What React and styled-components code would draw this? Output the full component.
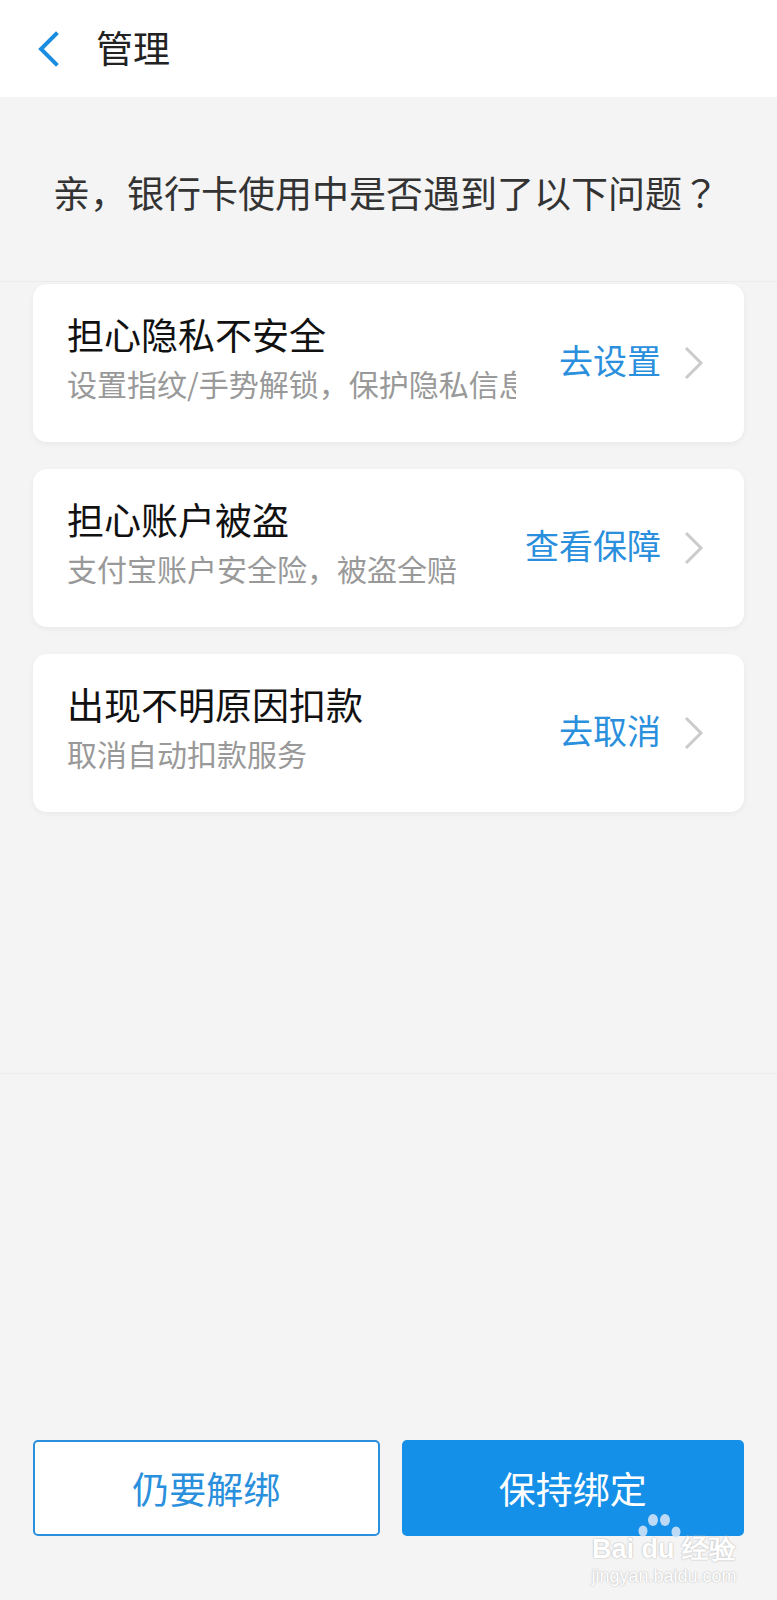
import React from "react";
import styled, { createGlobalStyle } from "styled-components";

const GlobalStyle = createGlobalStyle`
  body {
    margin: 0;
    background: #f4f4f4;
    font-family: "Noto Sans CJK SC", "Noto Sans", sans-serif;
  }
`;

const items = [
  {
    title: "担心隐私不安全",
    desc: "设置指纹/手势解锁，保护隐私信息",
    action: "去设置",
  },
  {
    title: "担心账户被盗",
    desc: "支付宝账户安全险，被盗全赔",
    action: "查看保障",
  },
  {
    title: "出现不明原因扣款",
    desc: "取消自动扣款服务",
    action: "去取消",
  },
];

function App() {
  return (
    <Page>
      <GlobalStyle />
      <Header>
        <BackButton>
          <svg width="24" height="36" viewBox="0 0 24 36">
            <path
              d="M20 3 L5 18 L20 33"
              fill="none"
              stroke="#1b8de0"
              strokeWidth="4"
              strokeLinecap="square"
            />
          </svg>
        </BackButton>
        <Title>管理</Title>
      </Header>

      <Question>
        亲，银行卡使用中是否遇到了以下问题<Mark>？</Mark>
      </Question>

      <CardList>
        {items.map((item) => (
          <Card key={item.title}>
            <TextBlock>
              <CardTitle>{item.title}</CardTitle>
              <CardDesc>{item.desc}</CardDesc>
            </TextBlock>
            <Action>{item.action}</Action>
            <Chevron>
              <svg width="22" height="34" viewBox="0 0 22 34">
                <path
                  d="M3 2 L18 17 L3 32"
                  fill="none"
                  stroke="#cbcbcb"
                  strokeWidth="3"
                />
              </svg>
            </Chevron>
          </Card>
        ))}
      </CardList>

      <Footer>
        <OutlineButton>仍要解绑</OutlineButton>
        <SolidButton>保持绑定</SolidButton>
      </Footer>

      <Watermark>
        <svg width="44" height="30" viewBox="0 0 44 30">
          <ellipse cx="15" cy="6" rx="5" ry="6" fill="#cfe3f7" />
          <ellipse cx="27" cy="6" rx="5" ry="6" fill="#cfe3f7" />
          <ellipse cx="5" cy="17" rx="4.5" ry="5.5" fill="#cfe3f7" />
          <ellipse cx="38" cy="18" rx="4.5" ry="5.5" fill="#cfe3f7" />
        </svg>
        <WatermarkBrand>Bai du 经验</WatermarkBrand>
        <WatermarkUrl>jingyan.baidu.com</WatermarkUrl>
      </Watermark>
    </Page>
  );
}

export default App;

const Page = styled.div`
  position: relative;
  width: 777px;
  height: 1600px;
  overflow: hidden;
  background: #f4f4f4;
`;

const Header = styled.div`
  height: 97px;
  background: #fff;
  display: flex;
  align-items: center;
`;

const BackButton = styled.div`
  width: 24px;
  height: 36px;
  margin-left: 36px;
  margin-right: 36px;
  display: flex;
`;

const Title = styled.div`
  font-size: 37px;
  color: #222;
  line-height: 1;
  margin-top: -2px;
`;

const Question = styled.div`
  height: 185px;
  box-sizing: border-box;
  padding: 6px 0 0 53px;
  display: flex;
  align-items: center;
  font-size: 37px;
  color: #333;
  border-bottom: 1px solid #ececec;
`;

const Mark = styled.span`
  font-family: "Noto Sans CJK TC", "Noto Sans CJK SC", sans-serif;
`;

const CardList = styled.div`
  height: 792px;
  box-sizing: border-box;
  padding: 2px 33px 0;
  display: flex;
  flex-direction: column;
  gap: 27px;
  border-bottom: 1px solid #ececec;
`;

const Card = styled.div`
  height: 158px;
  flex-shrink: 0;
  background: #fff;
  border-radius: 14px;
  box-shadow: 0 2px 6px rgba(0, 0, 0, 0.05);
  display: flex;
  align-items: center;
  padding: 0 39px 0 34px;
`;

const TextBlock = styled.div`
  flex: 1;
  min-width: 0;
  display: flex;
  flex-direction: column;
  padding-bottom: 12px;
`;

const CardTitle = styled.div`
  font-size: 37px;
  line-height: 1.45;
  color: #111;
`;

const CardDesc = styled.div`
  max-width: 449px;
  overflow: hidden;
  white-space: nowrap;
  font-size: 30px;
  line-height: 1.45;
  color: #999;
`;

const Action = styled.div`
  font-size: 34px;
  color: #2a8fdc;
  margin-right: 22px;
  margin-top: -8px;
  white-space: nowrap;
`;

const Chevron = styled.div`
  width: 22px;
  height: 34px;
  display: flex;
`;

const Footer = styled.div`
  display: flex;
  gap: 22px;
  padding: 366px 33px 0;
`;

const BaseButton = styled.div`
  flex: 1 1 0;
  height: 96px;
  box-sizing: border-box;
  border-radius: 5px;
  display: flex;
  align-items: center;
  justify-content: center;
  font-size: 37px;
`;

const OutlineButton = styled(BaseButton)`
  background: #fff;
  border: 2px solid #2a8fdc;
  color: #2a8fdc;
`;

const SolidButton = styled(BaseButton)`
  background: #1590e8;
  color: #fff;
`;

const Watermark = styled.div`
  position: absolute;
  left: 590px;
  top: 1514px;
  width: 148px;
  display: flex;
  flex-direction: column;
  align-items: center;
  pointer-events: none;

  svg {
    margin-left: -8px;
    opacity: 0.9;
  }
`;

const WatermarkBrand = styled.div`
  margin-top: -8px;
  font-family: "Liberation Sans", Arial, sans-serif;
  font-weight: bold;
  font-size: 27px;
  line-height: 1;
  color: #fff;
  white-space: nowrap;
  text-shadow: 0 0 2px #bdbdbd, 0 0 1px #bdbdbd;
`;

const WatermarkUrl = styled.div`
  margin-top: 4px;
  font-family: "Liberation Sans", Arial, sans-serif;
  font-size: 18px;
  line-height: 1;
  color: #fff;
  white-space: nowrap;
  text-shadow: 0 0 2px #c4c4c4, 0 0 1px #c4c4c4;
`;
